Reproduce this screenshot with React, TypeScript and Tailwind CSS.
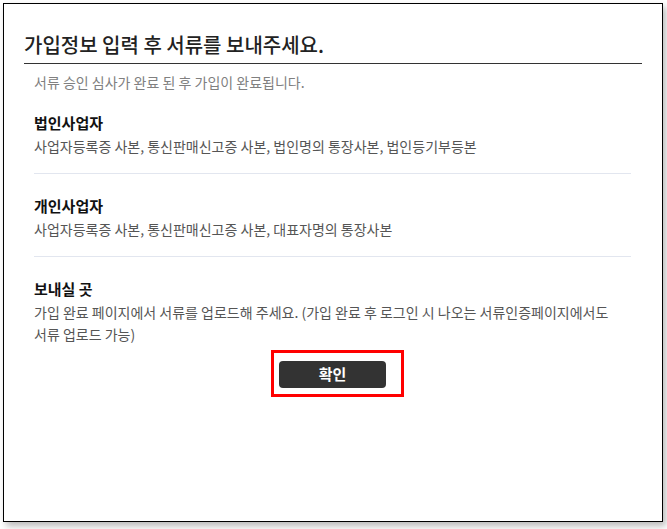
export default function App() {
    const sections = [
        {
            title: "법인사업자",
            lines: ["사업자등록증 사본, 통신판매신고증 사본, 법인명의 통장사본, 법인등기부등본"],
        },
        {
            title: "개인사업자",
            lines: ["사업자등록증 사본, 통신판매신고증 사본, 대표자명의 통장사본"],
        },
    ];

    return (
        <div className="w-[667px] h-[529px] bg-white pt-[3px] pl-[3px] overflow-hidden font-['Noto_Sans_CJK_KR','Noto_Sans',sans-serif]">
            <div className="w-[660px] h-[519px] border border-black bg-white shadow-[3px_4px_7px_rgba(0,0,0,0.28)]">
                <div className="mx-5 pt-[27px] pb-1 border-b border-[#333]">
                    <h2 className="text-[20px] leading-7 font-medium text-[#222]">가입정보 입력 후 서류를 보내주세요.</h2>
                </div>
                <div className="pl-[30px] pr-[31px]">
                    <p className="pt-2 text-[14px] leading-5 text-[#808080]">서류 승인 심사가 완료 된 후 가입이 완료됩니다.</p>
                    {sections.map((s, i) => (
                        <div key={s.title} className={`${i === 0 ? "pt-[21px]" : "pt-[22px]"} pb-4 border-b border-[#e2e6ef]`}>
                            <h3 className="text-[15px] leading-5 font-bold text-[#111]">{s.title}</h3>
                            <p className="mt-0.5 text-[14px] leading-[22px] text-[#555]">{s.lines[0]}</p>
                        </div>
                    ))}
                    <div className="pt-[22px]">
                        <h3 className="text-[15px] leading-5 font-bold text-[#111]">보내실 곳</h3>
                        <p className="mt-0.5 text-[14px] leading-[22px] text-[#555]">
                            가입 완료 페이지에서 서류를 업로드해 주세요. (가입 완료 후 로그인 시 나오는 서류인증페이지에서도
                            <br />
                            서류 업로드 가능)
                        </p>
                    </div>
                    <div className="mt-4 flex justify-center">
                        <div className="relative">
                            <button
                                type="button"
                                className="w-[107px] h-[27px] bg-[#333] rounded-sm text-white text-[15px] font-bold flex items-center justify-center"
                            >
                                확인
                            </button>
                            <div className="absolute left-[-8px] top-[-11px] w-[133px] h-[47px] border-[3px] border-[#f00] pointer-events-none" />
                        </div>
                    </div>
                </div>
            </div>
        </div>
    );
}
